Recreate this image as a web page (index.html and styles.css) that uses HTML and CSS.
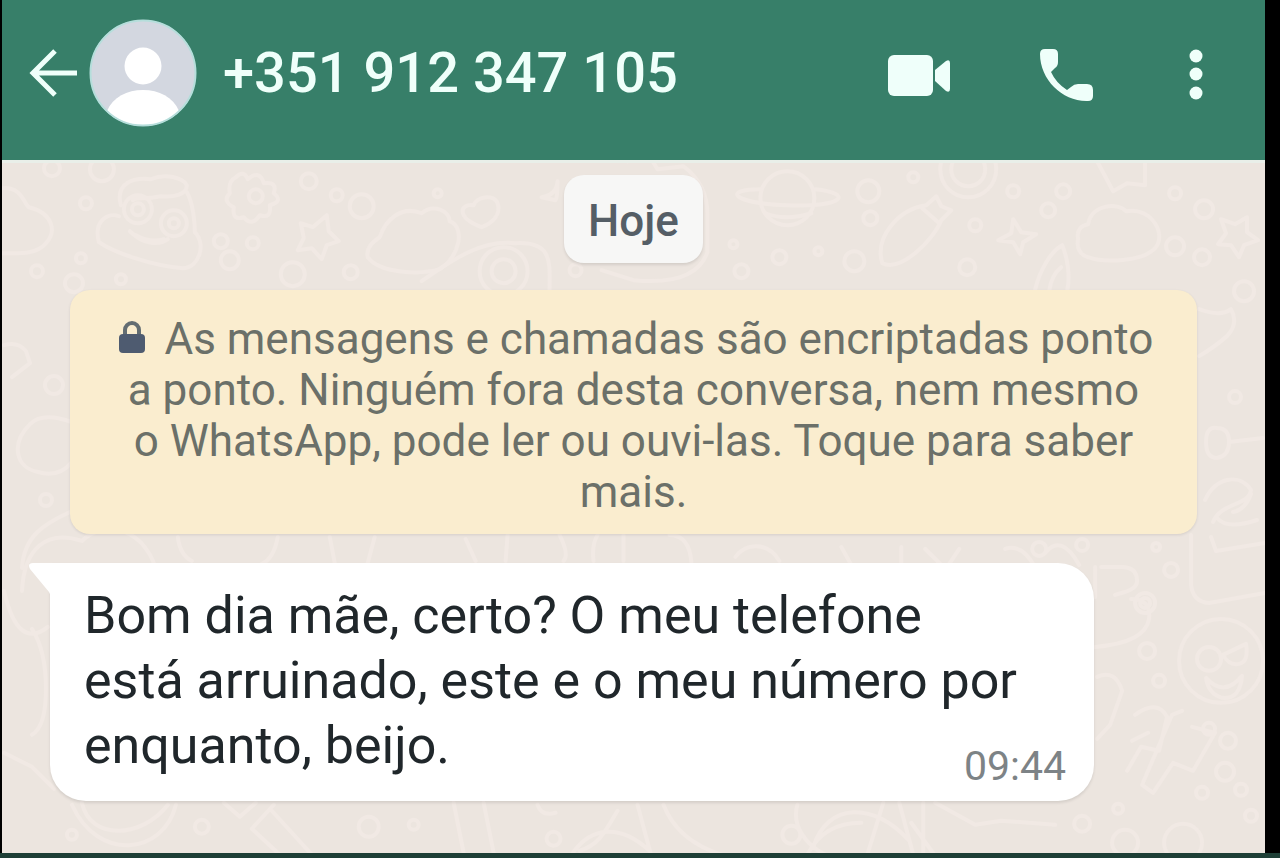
FILE: index.html
```html
<!DOCTYPE html>
<html lang="pt">
<head>
    <meta charset="UTF-8">
    <meta name="viewport" content="width=device-width, initial-scale=1.0">
    <title>+351 912 347 105</title>
    <link rel="stylesheet" href="styles.css">
</head>
<body>
    <div class="screen">
        <header class="topbar">
            <button class="icon-btn back" type="button" aria-label="Voltar">
                <svg width="50" height="50" viewBox="0 0 50 50" fill="none" stroke="currentColor" stroke-width="5">
                    <path d="M27 3 5 25l22 22M4 25h45"/>
                </svg>
            </button>
            <svg class="avatar" width="108" height="108" viewBox="0 0 108 108" aria-hidden="true">
                <defs>
                    <clipPath id="avatar-clip"><circle cx="54" cy="54" r="53"/></clipPath>
                </defs>
                <g clip-path="url(#avatar-clip)">
                    <rect width="108" height="108" fill="#d3d7e0"/>
                    <circle cx="54" cy="47" r="18.500" fill="#fff"/>
                    <path d="M18 92C24 78 38 71 54 71s30 7 36 21v16H18z" fill="#fff"/>
                </g>
                <circle cx="54" cy="54" r="52.500" fill="none" stroke="#b5dedb" stroke-width="2"/>
            </svg>
            <h1 class="contact">+351 912 347 105</h1>
            <div class="actions">
                <button class="icon-btn" type="button" aria-label="Videochamada">
                    <svg width="64" height="56" viewBox="0 0 64 56" fill="currentColor">
                        <rect x="1" y="8" width="45" height="41" rx="6"/>
                        <path d="M48 23 59 14q4-2 4 2v26q0 4-4 2L48 34z"/>
                    </svg>
                </button>
                <button class="icon-btn" type="button" aria-label="Chamada">
                    <svg width="56" height="56" viewBox="0 0 56 56" fill="currentColor">
                        <path d="M6 2h8q5 0 5 5v8q0 4-3 6l-4 4q5 11 16 18l4-3q3-3 7-3h9q6 0 6 6v6q0 5-5 5C24 55 1 33 1 7q0-5 5-5z"/>
                    </svg>
                </button>
                <button class="icon-btn" type="button" aria-label="Mais opções">
                    <svg width="26" height="56" viewBox="0 0 26 56" fill="currentColor">
                        <circle cx="13" cy="9" r="6.500"/>
                        <circle cx="13" cy="27" r="6.500"/>
                        <circle cx="13" cy="46" r="6.500"/>
                    </svg>
                </button>
            </div>
        </header>

        <main class="chat">
            <svg class="wallpaper" viewBox="0 160 1264 694" preserveAspectRatio="xMidYMid slice" aria-hidden="true">
                <!-- nuvens -->
                <path d="M0 187c20-2 22 16 27 19 24 6 28 24 17 36-10 12-28 10-44 10"/>
                <path d="M366 256c-2-10 6-16 12-20 6-18 22-32 42-24 12-10 28-2 28 8 16 6 10 36-10 48-20 6-60 4-72-12z"/>
                <path d="M1077 238c-2-10 4-14 10-15 3-20 30-22 38-13 26-5 42 25 28 38-12 12-50 14-66 8-8-2-12-10-10-18z"/>
                <!-- palhaco -->
                <path d="M119 204c-6-22 12-28 30-26 14-6 32-2 36 6 0 10-14 12-26 11-18 4-24 0-28 4m54-8c6 10 8 30 8 40 12 12 4 36-12 36-30-2-70-16-84-26-6-22 10-30 20-26"/>
                <circle cx="136" cy="208" r="14"/><circle cx="136" cy="208" r="6"/><circle cx="172" cy="222" r="13"/><circle cx="172" cy="222" r="5"/>
                <path d="M128 230c14 14 30 14 38 8m-32-4q14 8 28 4"/>
                <!-- flor e estrelas -->
                <path d="M234 176q8-8 12 2 12-10 16 4 14-2 10 10 10 8-4 12 2 14-10 10-8 12-16 2-12 4-10-10-12-6-4-14-2-12 6-16z"/>
                <circle cx="254" cy="195" r="7"/>
                <path d="m299 222 12 4 14-12 2 16 10 10-12 4-5 14-10-11-14 2 6-12zM1220 218l14 5 12-7v15l11 8-14 5-5 12-8-12-13-1 8-11zM1012 218l8 13 15 2-13 8-3 12-7-12-15-2 13-7zM540 196q15-2 16-16 0 16-2 19z"/>
                <!-- coracao -->
                <path d="M480 226c-26-10-22-24-8-22 2-8 20-12 24-2 4 12-6 20-16 24z"/>
                <!-- planeta -->
                <circle cx="786" cy="197" r="27"/>
                <path d="M760 188c-40 0-30 14 26 16 58 2 66-12 28-16m-50 24q20 8 46 0"/>
                <!-- caracol -->
                <path d="M420 280c34-24 62-42 94-38 38-2 34 20 34 48"/><circle cx="502" cy="270" r="24"/><circle cx="502" cy="270" r="12"/>
                <circle cx="967" cy="168" r="28"/><circle cx="967" cy="168" r="17"/>
                <path d="M1096 160l16 30 14-8 18 2v-24M626 160l18-12 12 20 26-3q24 18 24 48v38q-12 34-74 28l-32-10"/>
                <!-- pimenta e foguete -->
                <path d="M881 262c-8-26 16-54 44-58l10-9 5 10 10 4-10 10c-8 20-40 52-59 43zm40-55 17 15M1034 288c5-20 16-38 27-44 6 14 8 32 5 46m-18 0q2-16 12-24"/>
                <!-- laterais -->
                <path d="M2 344q14-4 22 6l4 12-18 14m60 45c-22-8-34-6-42 2-20 20-14 44 8 48 14 4 26 0 34-10m-50 106c2-32 22-44 48-56M20 590c2-42 24-62 60-50 22-22 66-14 76 36"/>
                <path d="M1198 308q22 8 32 0 8 14-4 27-14 12-28 20m18 72q12 0 12 14t-12 16q-11 0-11-16t11-14m12 14 34-4m-58 62c10-22 34-28 46-10-2 16-30 12-38 32m38-28q-6 16-18 18m-16 6q10 12 40 2"/>
                <path d="M1190 534v50q2 17 18 18l56-10m-54-56 5 14 49-8M1100 566h20q16 0 16 14c0 10-18 12-22 14m-20-28v30m36 2q20 0 18 20-4 24-54 28"/>
                <!-- cara com oculos -->
                <circle cx="1220" cy="660" r="42"/><circle cx="1208" cy="658" r="12"/>
                <path d="M1222 654l23-11q3 18-7 20-10 2-16-9zm-17 23q18 20 36-2-2 24-20 22-14-4-16-20z"/>
                <!-- notas e dedos -->
                <path d="M1096 676q18-8 25 14l-12 34-13 14m38-24q22-16 32 2l-8 34-18-4-14 24m21-38-16 8m50-30-10 4-30 70 11 8 20-30 20 8 22-38-23-6"/>
                <!-- faixa inferior -->
                <path d="M2 752l28 14 22 22m-22-160q14 22 14 60t-14 46M80 802c8 38 60 36 86 2m8 0c-12 50-78 58-104 0m152-2 16 14 16-14m18 2-22 24 28 26m-8-44 42 46M2 590q14 60 44 36m406 176 10 50m20-50 10 50m44-48q4 12 18 8m62-2c-12 20-18 34-38 40m58-46 14 52m12-52q14 36 58 50m76-50c-6 20 8 40 28 50m-18 0q16-32 54-32M570 854c20-30 50-30 78-4m164-4c14-44 60-46 96-6m-26-38-16 52m32-52 14 52m10-52v52m12-52 40 22 26-4 54 4m-144-2 26 36"/>
                <circle cx="1182" cy="842" r="19"/><circle cx="1124" cy="842" r="13"/>
                <!-- entre o aviso e a mensagem -->
                <path d="M176 536q2 18 14 24m86-24q-4 22-16 27m68-27 5 26m40-26-7 26m98-24 10 22m32-26-2 26m54-26q10 20 4 26m34-26q-6 10-4 26m30-26v26m46-26q20 0 22 28m44-6c10-14 32-16 44 4m62-14 10 18m50-18v20m24-18 16 16m18-16-12 18m58-18q16-6 30 18m10-14q16-20 34 12"/>
                <!-- bolinhas -->
                <g>
                    <circle cx="84" cy="202" r="6"/><circle cx="100" cy="168" r="12"/><circle cx="50" cy="167" r="8"/><circle cx="79" cy="257" r="5"/><circle cx="35" cy="270" r="6"/><circle cx="72" cy="282" r="9"/><circle cx="119" cy="278" r="5"/>
                    <circle cx="52" cy="384" r="9"/><circle cx="44" cy="499" r="6"/><circle cx="1234" cy="396" r="6"/>
                    <circle cx="219" cy="240" r="7"/><circle cx="251" cy="242" r="6"/><circle cx="228" cy="259" r="9"/><circle cx="307" cy="180" r="8"/><circle cx="335" cy="194" r="6"/><circle cx="360" cy="205" r="12"/><circle cx="291" cy="273" r="12"/><circle cx="349" cy="271" r="7"/>
                    <circle cx="436" cy="192" r="4"/><circle cx="574" cy="269" r="6"/><circle cx="740" cy="270" r="7"/><circle cx="778" cy="256" r="7"/><circle cx="732" cy="243" r="4"/><circle cx="817" cy="250" r="4"/>
                    <circle cx="867" cy="190" r="11"/><circle cx="869" cy="217" r="7"/><circle cx="853" cy="260" r="10"/><circle cx="912" cy="176" r="5"/><circle cx="974" cy="224" r="6"/><circle cx="966" cy="266" r="8"/><circle cx="1012" cy="190" r="6"/><circle cx="1047" cy="209" r="7"/><circle cx="1062" cy="190" r="7"/>
                    <circle cx="1174" cy="192" r="6"/><circle cx="1203" cy="208" r="9"/><circle cx="1174" cy="245" r="9"/><circle cx="1201" cy="256" r="8"/><circle cx="1243" cy="290" r="10"/>
                    <circle cx="1038" cy="548" r="7"/><circle cx="1081" cy="544" r="6"/><circle cx="1155" cy="546" r="4"/><circle cx="1170" cy="569" r="7"/><circle cx="1144" cy="602" r="10"/><circle cx="1144" cy="602" r="5"/><circle cx="1146" cy="650" r="8"/><circle cx="1158" cy="680" r="6"/>
                    <circle cx="1208" cy="728" r="6"/><circle cx="1227" cy="740" r="8"/><circle cx="1224" cy="771" r="9"/><circle cx="1201" cy="792" r="6"/><circle cx="1240" cy="789" r="6"/><circle cx="1117" cy="808" r="5"/><circle cx="1081" cy="823" r="8"/><circle cx="1250" cy="815" r="6"/>
                    <circle cx="70" cy="834" r="5"/><circle cx="200" cy="826" r="7"/><circle cx="367" cy="826" r="10"/><circle cx="412" cy="824" r="5"/><circle cx="552" cy="838" r="7"/><circle cx="790" cy="834" r="9"/>
                </g>
            </svg>

            <div class="day">Hoje</div>

            <p class="notice">
                <svg class="lock" width="28" height="34" viewBox="0 0 28 34" aria-hidden="true">
                    <path d="M7 16v-6a7 7 0 0 1 14 0v6" fill="none" stroke="#636d72" stroke-width="4"/>
                    <rect x="1" y="14" width="26" height="19" rx="4" fill="#4e5b70"/>
                </svg>
                As mensagens e chamadas são encriptadas ponto a ponto. Ninguém fora desta conversa, nem mesmo o WhatsApp, pode ler ou ouvi-las. Toque para saber mais.
            </p>

            <article class="message">
                <svg class="tail" width="24" height="36" viewBox="0 0 24 36" aria-hidden="true">
                    <path d="M24 0H5Q-1 0 2 6l19 23q2 3 2 7h1z" fill="#fff"/>
                </svg>
                <p class="message-text">
                    Bom dia mãe, certo? O meu telefone está arruinado, este e o meu número por enquanto, beijo.
                    <time class="message-time" datetime="09:44">09:44</time>
                </p>
            </article>
        </main>
    </div>
</body>
</html>
```
FILE: styles.css
```css
:root {
    --bar-color: #377f69;
    --bar-text: #effffa;
    --chat-bg: #ece5df;
    --doodle: #f1e9e4;
    --notice-bg: #faedcf;
    --notice-text: #6b7069;
    --text-color: #20272b;
}

* {
    box-sizing: border-box;
    margin: 0;
    padding: 0;
}

body {
    font-family: Roboto, "Liberation Sans", sans-serif;
    background-color: #000;
    color: var(--text-color);
}

.screen {
    display: flex;
    flex-direction: column;
    min-height: 100vh;
    padding: 0 15px 0 2px;
    border-bottom: 5px solid #1e3f36;
}

.topbar {
    display: flex;
    align-items: center;
    padding: 19px 56px 33px 26px;
    background-color: var(--bar-color);
    color: var(--bar-text);
}

.icon-btn {
    display: flex;
    border: none;
    background: none;
    color: inherit;
    cursor: pointer;
}

.back {
    margin-right: 11px;
}

.avatar {
    flex: none;
}

.contact {
    margin-left: 26px;
    font-size: 56px;
    line-height: 64px;
    font-weight: 500;
    white-space: nowrap;
}

.actions {
    display: flex;
    gap: 88px;
    margin-left: auto;
    padding-top: 4px;
}

.chat {
    position: relative;
    z-index: 0;
    display: flex;
    flex: 1;
    flex-direction: column;
    align-items: center;
    padding: 12px 68px 48px;
    border-top: 3px solid #e9efe9;
    background-color: var(--chat-bg);
}

.wallpaper {
    position: absolute;
    inset: 0;
    z-index: -1;
    width: 100%;
    height: 100%;
    fill: none;
    stroke: var(--doodle);
    stroke-width: 4;
    stroke-linecap: round;
    stroke-linejoin: round;
}

.day {
    padding: 21px 24px 17px;
    border-radius: 20px;
    background-color: #f7f7f6;
    box-shadow: 0 2px 3px rgba(0, 0, 0, 0.1);
    color: #555e66;
    font-size: 44px;
    line-height: 50px;
    font-weight: 500;
}

.notice {
    width: 100%;
    margin-top: 27px;
    padding: 24px 42px 16px;
    border-radius: 20px;
    background-color: var(--notice-bg);
    box-shadow: 0 1px 3px rgba(0, 0, 0, 0.1);
    color: var(--notice-text);
    font-size: 44px;
    line-height: 51px;
    text-align: center;
}

.lock {
    margin: 0 8px 0 4px;
}

.message {
    position: relative;
    align-self: flex-start;
    margin: 29px 0 0 -20px;
    padding: 20px 60px 18px 34px;
    border-radius: 0 36px 36px 36px;
    background-color: #fff;
    box-shadow: 0 2px 3px rgba(0, 0, 0, 0.1);
}

.tail {
    position: absolute;
    top: 0;
    left: -22px;
}

/* a hora fica na linha final do texto, encostada à direita */
.message-text {
    max-width: 950px;
    font-size: 52px;
    line-height: 65px;
}

.message-time {
    float: right;
    margin: 37px -32px 0 0;
    color: #7d8386;
    font-size: 41px;
    line-height: 33px;
}
```
